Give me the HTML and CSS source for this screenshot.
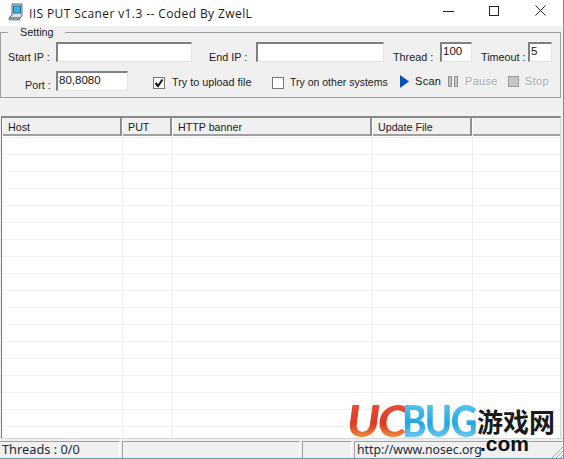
FILE: index.html
```html
<!DOCTYPE html>
<html lang="en">
<head>
  <meta charset="UTF-8">
  <title>IIS PUT Scaner v1.3</title>
  <link rel="stylesheet" href="styles.css">
</head>
<body>

  <div class="window">
    <div class="titlebar">
      <svg class="app-icon" width="16" height="18" viewBox="0 0 16 18">
        <path d="M4 1h10v12l-2 2H1l3-3z" fill="#d8dde2" stroke="#5a6470"/>
        <rect x="5.500" y="3" width="7" height="7" fill="#35b4e6" stroke="#2a6f99"/>
        <path d="M1 15h11v2H1z" fill="#aab2ba" stroke="#5a6470" stroke-width="0.700"/>
      </svg>
      <span class="title">IIS PUT Scaner v1.3 -- Coded By ZwelL</span>
      <div class="controls">
        <svg width="46" height="26" viewBox="0 0 46 26"><path d="M17 11.500h11" stroke="#222"/></svg>
        <svg width="46" height="26" viewBox="0 0 46 26"><rect x="17.500" y="6.500" width="9" height="9" fill="none" stroke="#222"/></svg>
        <svg width="46" height="26" viewBox="0 0 46 26"><path d="M17.500 5.500l10 10M27.500 5.500l-10 10" stroke="#222" fill="none"/></svg>
      </div>
    </div>

    <div class="main">
      <fieldset class="setting">
        <legend>Setting</legend>
        <div class="row">
          <label class="lbl lbl-start">Start IP :</label>
          <input class="field w-start" type="text">
          <label class="lbl lbl-end">End IP :</label>
          <input class="field w-end" type="text">
          <label class="lbl lbl-thread">Thread :</label>
          <input class="field w-thread" type="text" value="100">
          <label class="lbl lbl-timeout">Timeout :</label>
          <input class="field w-timeout" type="text" value="5">
        </div>
        <div class="row row-two">
          <label class="lbl lbl-port">Port :</label>
          <input class="field w-port" type="text" value="80,8080">
          <span class="check checked chk-upload"><svg width="10" height="10" viewBox="0 0 10 10"><path d="M1.500 5l2.500 3 4.500-6.500" fill="none" stroke="#111" stroke-width="2"/></svg></span>
          <span class="opt opt-upload">Try to upload file</span>
          <span class="check chk-other"></span>
          <span class="opt opt-other">Try on other systems</span>
          <span class="tool tool-scan">
            <svg width="9" height="13" viewBox="0 0 9 13"><path d="M0 0l9 6.500-9 6.500z" fill="#0a4fb4"/></svg>
            Scan
          </span>
          <span class="tool tool-pause off">
            <svg width="10" height="11" viewBox="0 0 10 11"><path d="M.5.500h3v10h-3zM6.500.500h3v10h-3z" fill="#c6c6c6" stroke="#8f8f8f"/></svg>
            Pause
          </span>
          <span class="tool tool-stop off">
            <svg width="11" height="11" viewBox="0 0 11 11"><rect x=".5" y=".5" width="10" height="10" fill="#c6c6c6" stroke="#9a9a9a"/></svg>
            Stop
          </span>
        </div>
      </fieldset>

      <div class="strip"></div>

      <div class="list">
        <div class="list-head">
          <div class="col col-host">Host</div>
          <div class="col col-put">PUT</div>
          <div class="col col-banner">HTTP banner</div>
          <div class="col col-update">Update File</div>
          <div class="col col-rest"></div>
        </div>
        <div class="list-body"></div>
      </div>
    </div>

    <div class="statusbar">
      <div class="pane pane-threads">Threads : 0/0</div>
      <div class="pane pane-b"></div>
      <div class="pane pane-c"></div>
      <div class="pane pane-url">http://www.nosec.org</div>
      <svg class="grip" width="12" height="12" viewBox="0 0 12 12"><path d="M1 12L12 1M5 12l7-7M9 12l3-3" stroke="#a8a8a8" fill="none"/></svg>
    </div>

    <!-- site watermark over the screenshot -->
    <div class="mark">
      <span class="mark-uc">UC</span><span class="mark-bug">BUG</span>
      <span class="mark-cn">游戏网</span>
      <span class="mark-com">.com</span>
    </div>
  </div>

</body>
</html>
```

FILE: styles.css
```css
html, body {
  margin: 0;
  padding: 0;
}
body {
  font-family: "Noto Sans", "Liberation Sans", sans-serif;
  background: #fff;
  overflow: hidden;
}
.window {
  position: relative;
  width: 564px;
  height: 459px;
  box-sizing: border-box;
  display: flex;
  flex-direction: column;
  background: #f0f0f0;
  border-right: 1px solid #5f9ea8;
  border-bottom: 1px solid #5f9ea8;
}

/* Title bar */
.titlebar {
  height: 26px;
  flex: none;
  display: flex;
  align-items: center;
  background: #fff;
}
.app-icon {
  margin-left: 8px;
  margin-top: -2px;
}
.title {
  margin-left: 5px;
  font-family: "Open Sans", sans-serif;
  font-size: 12px;
  letter-spacing: 0.4px;
  color: #1a1a1a;
}
.controls {
  margin-left: auto;
  display: flex;
  margin-right: -1px;
}
.controls svg {
  display: block;
}

/* Setting group */
.main {
  flex: 1;
  display: flex;
  flex-direction: column;
  min-height: 0;
  padding-right: 2px;
}
.setting {
  flex: none;
  margin: 0;
  padding: 0 0 6px 0;
  border: 1px solid #a0a0a0;
  min-width: 0;
  font-family: "Liberation Sans", sans-serif;
  font-size: 10.800px;
}
.setting legend {
  margin-left: 7px;
  padding: 0 11px 0 12px;
  color: #222;
  line-height: 12px;
}
.row {
  display: flex;
  align-items: flex-start;
  height: 20px;
  margin-top: 4px;
}
.row-two {
  margin-top: 9px;
}
.lbl {
  display: block;
  white-space: nowrap;
  color: #222;
  line-height: 14px;
  margin-top: 8px;
}
.lbl-start { margin-left: 7px; width: 48px; }
.lbl-end { margin-left: 17px; width: 47px; }
.lbl-thread { margin-left: 9px; width: 47px; }
.lbl-timeout { margin-left: 9px; width: 47px; }
.lbl-port { margin-left: 24px; width: 31px; margin-top: 7px; }
.field {
  box-sizing: border-box;
  height: 20px;
  margin: 0;
  padding: 0 0 4px 1px;
  font-family: "Liberation Sans", sans-serif;
  font-size: 11.500px;
  color: #111;
  background: #fff;
  border: 1px solid #fff;
  border-top: 2px solid #808080;
  border-left: 2px solid #808080;
  border-right-color: #e4e4e4;
  border-bottom-color: #e4e4e4;
  outline: none;
}
.w-start { width: 136px; }
.w-end { width: 128px; }
.w-thread { width: 32px; }
.w-timeout { width: 24px; }
.w-port { width: 72px; }

.check {
  box-sizing: border-box;
  width: 12px;
  height: 12px;
  flex: none;
  margin-top: 6px;
  display: flex;
  align-items: center;
  justify-content: center;
  background: #fff;
  border: 1px solid #777;
}
.chk-upload { margin-left: 25px; }
.chk-other { margin-left: 23px; }
.opt {
  white-space: nowrap;
  color: #222;
  line-height: 14px;
  margin-top: 4px;
}
.opt-upload { margin-left: 7px; width: 77px; }
.opt-other { margin-left: 6px; width: 96px; font-size: 10.500px; }
.tool {
  display: flex;
  align-items: center;
  gap: 7px;
  line-height: 14px;
  font-size: 11px;
  letter-spacing: 0.3px;
  color: #111;
  margin-top: 3px;
}
.tool svg {
  flex: none;
}
.tool.off {
  color: #a8a8a8;
  text-shadow: 1px 1px 0 #fff;
}
.tool-scan { margin-left: 14px; width: 40px; gap: 6px; }
.tool-pause { margin-left: 8px; width: 47px; }
.tool-stop { margin-left: 13px; gap: 6px; }

/* Empty strip above the list */
.strip {
  height: 18px;
  flex: none;
}

/* List view */
.list {
  flex: 1;
  display: flex;
  flex-direction: column;
  min-height: 0;
  margin-left: 1px;
  border-top: 2px solid #8a8a8a;
  border-left: 1px solid #777;
  border-right: 1px solid #d8d8d8;
  background: #fff;
}
.list-head {
  height: 16px;
  flex: none;
  display: grid;
  grid-template-columns: 120px 50px 200px 100px 1fr;
  font-family: "Liberation Sans", sans-serif;
  font-size: 10.700px;
  color: #222;
  background: #f0f0f0;
  border-bottom: 2px solid #a0a0a0;
}
.col {
  box-sizing: border-box;
  padding-left: 5px;
  line-height: 18px;
  border-right: 2px solid #8f8f8f;
  border-left: 1px solid #fff;
}
.col-rest {
  border-right: none;
}
.list-body {
  flex: 1;
  background-color: #fff;
  background-image:
    linear-gradient(#f0f0f0, #f0f0f0),
    linear-gradient(#f0f0f0, #f0f0f0),
    linear-gradient(#f0f0f0, #f0f0f0),
    linear-gradient(#f0f0f0, #f0f0f0),
    repeating-linear-gradient(to bottom, transparent 0, transparent 1px, #f0f0f0 1px, #f0f0f0 2px, transparent 2px, transparent 17px);
  background-size: 1px 100%, 1px 100%, 1px 100%, 1px 100%, 100% 100%;
  background-position: 120px 0, 170px 0, 370px 0, 470px 0, 0 0;
  background-repeat: no-repeat;
}

/* Status bar */
.statusbar {
  position: relative;
  height: 20px;
  flex: none;
  display: flex;
  gap: 2px;
  box-sizing: border-box;
  padding-top: 2px;
  font-size: 12.800px;
  color: #1c2a3a;
  border-top: 1px solid #d8d8d8;
}
.pane {
  box-sizing: border-box;
  padding-left: 2px;
  line-height: 15px;
  white-space: nowrap;
  border-top: 1px solid #a0a0a0;
  border-left: 1px solid #a0a0a0;
  border-right: 1px solid #fff;
}
.pane-threads { width: 120px; border-left: none; }
.pane-b { width: 178px; }
.pane-c { width: 50px; }
.pane-url { flex: 1; font-size: 12.250px; }
.grip {
  position: absolute;
  right: 0;
  bottom: 0;
}

/* Watermark */
.mark {
  position: absolute;
  left: 347px;
  top: 402px;
  width: 212px;
  height: 52px;
  pointer-events: none;
}
.mark-uc, .mark-bug {
  position: absolute;
  top: 1px;
  font-family: "Lato", sans-serif;
  font-weight: 900;
  font-size: 44px;
  line-height: 34px;
  letter-spacing: -2px;
  transform-origin: left center;
  -webkit-background-clip: text;
  background-clip: text;
  color: transparent;
}
.mark-uc {
  left: 0;
  font-style: italic;
  transform: scaleX(1.08);
  background-image: linear-gradient(#e8503a, #d93a22 60%, #f08a3a);
}
.mark-bug {
  left: 55px;
  transform: scaleX(0.84);
  background-image: linear-gradient(#5cc4ee, #22a5e0 60%, #6cc8ee);
}
.mark-cn {
  position: absolute;
  left: 130px;
  top: 6px;
  font-family: "Noto Sans CJK SC", sans-serif;
  font-weight: 700;
  font-size: 26px;
  line-height: 26px;
  color: #1a1a1a;
}
.mark-com {
  position: absolute;
  left: 133px;
  top: 35px;
  font-family: "Liberation Sans", sans-serif;
  font-weight: 700;
  font-size: 21px;
  line-height: 14px;
  color: #111;
}
```
